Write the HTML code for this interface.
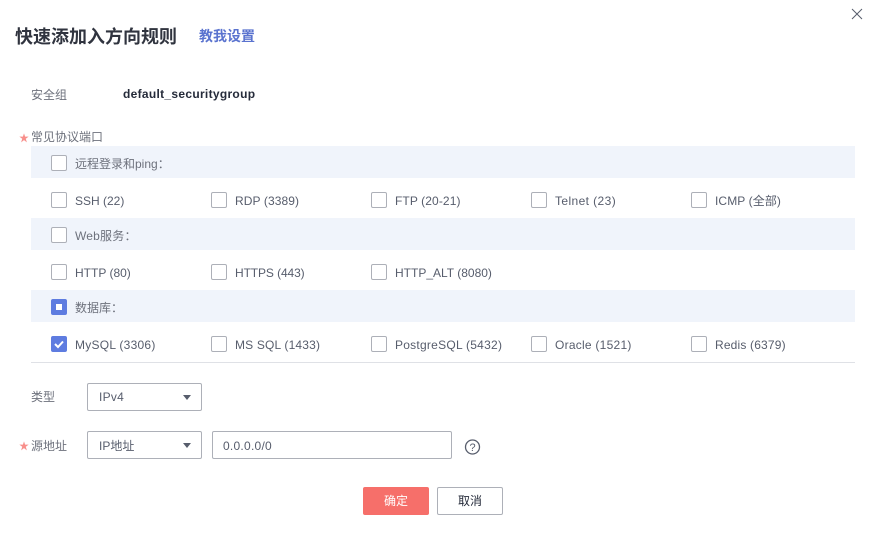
<!DOCTYPE html>
<html><head><meta charset="utf-8">
<style>
html,body{margin:0;padding:0;background:#fff}
body{width:876px;height:534px;position:relative;overflow:hidden;font-family:"Liberation Sans","Noto Sans CJK SC",sans-serif;font-size:12px;color:#575d6c}
.t{position:absolute;white-space:nowrap;line-height:16px}
.l{letter-spacing:.25px}
.c{color:#6d717c}
.band{position:absolute;left:31px;width:824px;height:32px;background:#f0f4fb}
.cb{position:absolute;width:14px;height:14px;border:1px solid #adb0b8;border-radius:2px;background:#fff}
.on{background:#5e7ce0;border-color:#5e7ce0}
.box{position:absolute;height:26px;border:1px solid #adb0b8;border-radius:2px;background:#fff;box-sizing:content-box}
.arr{position:absolute;width:0;height:0;border-left:4px solid transparent;border-right:4px solid transparent;border-top:5px solid #575d6c}
.star{position:absolute;left:18.5px}
</style></head><body>
<div class="t" style="left:15px;top:26px;font-size:18px;line-height:22px;font-weight:bold;color:#30343f">快速添加入方向规则</div>
<div class="t" style="left:199px;top:28px;font-size:14px;line-height:16px;font-weight:bold;color:#5a73cf">教我设置</div>
<svg style="position:absolute;left:851px;top:8px" width="12" height="12" viewBox="0 0 12 12"><path d="M1 1L11 11M11 1L1 11" stroke="#575d6c" stroke-width="1" fill="none"/></svg>
<div class="t c" style="left:31px;top:87px">安全组</div>
<div class="t" style="left:123px;top:86px;font-weight:bold;color:#252b3a;letter-spacing:.3px">default_securitygroup</div>
<svg class="star" style="top:132.5px" width="10" height="10" viewBox="0 0 9 9"><path d="M4.5 0.3L5.5 3.3H8.7L6.1 5.2L7.1 8.4L4.5 6.4L1.9 8.4L2.9 5.2L0.3 3.3H3.5Z" fill="#f88f8b"/></svg>
<div class="t c" style="left:31px;top:129px">常见协议端口</div>

<div class="band" style="top:146px"></div>
<div class="cb" style="left:51px;top:155px"></div><div class="t c" style="left:75px;top:156px">远程登录和ping：</div>
<div class="cb" style="left:51px;top:192px"></div><div class="t" style="left:75px;top:193px">SSH (22)</div>
<div class="cb" style="left:211px;top:192px"></div><div class="t" style="left:235px;top:193px;letter-spacing:.1px">RDP (3389)</div>
<div class="cb" style="left:371px;top:192px"></div><div class="t" style="left:395px;top:193px;letter-spacing:.1px">FTP (20-21)</div>
<div class="cb" style="left:531px;top:192px"></div><div class="t" style="left:555px;top:193px;letter-spacing:.4px">Telnet (23)</div>
<div class="cb" style="left:691px;top:192px"></div><div class="t" style="left:715px;top:193px;letter-spacing:.1px">ICMP (全部)</div>

<div class="band" style="top:218px"></div>
<div class="cb" style="left:51px;top:227px"></div><div class="t c" style="left:75px;top:228px;letter-spacing:.2px">Web服务：</div>
<div class="cb" style="left:51px;top:264px"></div><div class="t" style="left:75px;top:265px">HTTP (80)</div>
<div class="cb" style="left:211px;top:264px"></div><div class="t" style="left:235px;top:265px;letter-spacing:-.1px">HTTPS (443)</div>
<div class="cb" style="left:371px;top:264px"></div><div class="t" style="left:395px;top:265px">HTTP_ALT (8080)</div>

<div class="band" style="top:290px"></div>
<div class="cb on" style="left:51px;top:299px"><div style="position:absolute;left:4px;top:4px;width:6px;height:6px;background:#fff"></div></div><div class="t c" style="left:75px;top:300px">数据库：</div>
<div class="cb on" style="left:51px;top:336px"><svg style="position:absolute;left:0;top:0" width="14" height="14" viewBox="0 0 14 14"><path d="M3 7L6 10L11 4.5" stroke="#fff" stroke-width="2" fill="none"/></svg></div><div class="t l" style="left:75px;top:337px">MySQL (3306)</div>
<div class="cb" style="left:211px;top:336px"></div><div class="t" style="left:235px;top:337px;letter-spacing:.17px">MS SQL (1433)</div>
<div class="cb" style="left:371px;top:336px"></div><div class="t l" style="left:395px;top:337px">PostgreSQL (5432)</div>
<div class="cb" style="left:531px;top:336px"></div><div class="t l" style="left:555px;top:337px">Oracle (1521)</div>
<div class="cb" style="left:691px;top:336px"></div><div class="t" style="left:715px;top:337px;letter-spacing:.17px">Redis (6379)</div>
<div style="position:absolute;left:31px;top:362px;width:824px;height:1px;background:#dfe1e6"></div>

<div class="t c" style="left:31px;top:389px">类型</div>
<div class="box" style="left:87px;top:383px;width:113px"></div>
<div class="t l" style="left:99px;top:389px">IPv4</div>
<div class="arr" style="left:183px;top:395px"></div>

<svg class="star" style="top:441px" width="10" height="10" viewBox="0 0 9 9"><path d="M4.5 0.3L5.5 3.3H8.7L6.1 5.2L7.1 8.4L4.5 6.4L1.9 8.4L2.9 5.2L0.3 3.3H3.5Z" fill="#f88f8b"/></svg>
<div class="t c" style="left:31px;top:438px">源地址</div>
<div class="box" style="left:87px;top:431px;width:113px"></div>
<div class="t" style="left:99px;top:438px">IP地址</div>
<div class="arr" style="left:183px;top:443px"></div>
<div class="box" style="left:212px;top:431px;width:238px"></div>
<div class="t l" style="left:223px;top:438px">0.0.0.0/0</div>
<svg style="position:absolute;left:464px;top:439px" width="17" height="17" viewBox="0 0 17 17"><circle cx="8.5" cy="8" r="7" stroke="#575d6c" stroke-width="1.3" fill="none"/><text x="8.5" y="12" font-size="11" text-anchor="middle" fill="#575d6c" font-family="Liberation Sans">?</text></svg>

<div style="position:absolute;left:363px;top:487px;width:66px;height:28px;background:#f66f6a;border-radius:2px;color:#fff;text-align:center;line-height:28px">确定</div>
<div style="position:absolute;left:437px;top:487px;width:64px;height:26px;border:1px solid #adb0b8;border-radius:2px;color:#252b3a;text-align:center;line-height:26px">取消</div>
</body></html>
